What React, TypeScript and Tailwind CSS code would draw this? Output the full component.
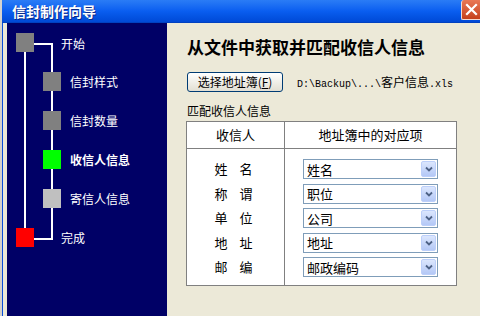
import React from "react";

const cjk = "font-['SimSun','Noto_Sans_CJK_SC',sans-serif]";

const steps = [
  { label: "信封样式", top: 49, color: "bg-[#808080]", bold: false },
  { label: "信封数量", top: 88, color: "bg-[#808080]", bold: false },
  { label: "收信人信息", top: 127, color: "bg-[#00ff00]", bold: true },
  { label: "寄信人信息", top: 166, color: "bg-[#c0c0c0]", bold: false },
];

const rows = [
  { name: ["姓", "名"], value: "姓名" },
  { name: ["称", "谓"], value: "职位" },
  { name: ["单", "位"], value: "公司" },
  { name: ["地", "址"], value: "地址" },
  { name: ["邮", "编"], value: "邮政编码" },
];

function Combo({ value }: { value: string }) {
  return (
    <div className="flex h-[20px] w-[135px] items-center justify-between border border-[#7f9db9] bg-white pl-[3px] pr-[1px]">
      <span className="text-[13px] leading-none text-black">{value}</span>
      <div className="flex h-[16px] w-[15px] items-center justify-center rounded-[2px] border border-[#bccffa] bg-linear-to-b from-[#dbe6fd] to-[#b4c8f6]">
        <svg width="8" height="6" viewBox="0 0 8 6">
          <path d="M1 1.5 L4 4.5 L7 1.5" fill="none" stroke="#4d6185" strokeWidth="1.8" />
        </svg>
      </div>
    </div>
  );
}

export default function App() {
  return (
    <div className={`flex h-[316px] w-[480px] overflow-hidden bg-[#d4d0c8] ${cjk}`}>
      <div className="w-[2px] bg-[#d6d3ce]" />

      <div className="flex flex-1 flex-col">
        {/* title bar */}
        <div className="flex h-[23px] items-start bg-linear-to-b from-[#2a7cf6] via-[#0a5ef0] to-[#0049d6] border-b border-[#0041c0]">
          <span className="ml-[10px] mt-[2px] text-[14px] font-bold leading-[18px] text-white [text-shadow:1px_1px_0_#0b2a8a]">
            信封制作向导
          </span>
          <div className="ml-auto flex h-[20px] w-[19px] items-center justify-center rounded-bl-[2px] rounded-tl-[3px] border-b border-l border-[#f4d9cf] bg-linear-to-b from-[#e97855] to-[#c5401a]">
            <svg width="13" height="13" viewBox="0 0 13 13">
              <path d="M2 2 L11 11 M11 2 L2 11" stroke="white" strokeWidth="2.2" strokeLinecap="square" />
            </svg>
          </div>
        </div>

        <div className="flex flex-1">
          <div className="w-[1px] bg-[#0a4fd8]" />
          <div className="w-[4px] bg-[#ece9d8]" />

          {/* step tree */}
          <div className="relative w-[160px] bg-[#000066]">
            <div className="absolute left-[17px] top-[29px] h-[176px] w-[2px] bg-white" />
            <div className="absolute left-[27px] top-[20px] h-[2px] w-[19px] bg-white" />
            <div className="absolute left-[44px] top-[20px] h-[197px] w-[2px] bg-white" />
            <div className="absolute left-[27px] top-[215px] h-[2px] w-[19px] bg-white" />

            <div className="absolute left-[9px] top-[10px] h-[19px] w-[18px] bg-[#808080]" />
            <span className="absolute left-[54px] top-[13px] text-[12px] leading-[16px] text-white">开始</span>

            {steps.map((s) => (
              <React.Fragment key={s.label}>
                <div className={`absolute left-[36px] h-[19px] w-[18px] ${s.color}`} style={{ top: s.top }} />
                <span
                  className={`absolute left-[63px] text-[12px] leading-[16px] text-white ${s.bold ? "font-bold" : ""}`}
                  style={{ top: s.top + 2 }}
                >
                  {s.label}
                </span>
              </React.Fragment>
            ))}

            <div className="absolute left-[9px] top-[205px] h-[19px] w-[18px] bg-[#ff0000]" />
            <span className="absolute left-[54px] top-[207px] text-[12px] leading-[16px] text-white">完成</span>
          </div>

          {/* content */}
          <div className="flex flex-1 flex-col bg-[#ece9d8] pl-[19px] pt-[12px] text-black">
            <h1 className="ml-[1px] text-[17px] font-bold leading-[24px]">从文件中获取并匹配收信人信息</h1>

            <div className="ml-[1px] mt-[13px] flex items-center gap-[14px]">
              <button className="h-[20px] w-[96px] rounded-[3px] border border-[#003c74] bg-linear-to-b from-white to-[#e2dfd3] text-[12px] leading-none">
                选择地址簿(<span className="underline">F</span>)
              </button>
              <span className="text-[10px] font-['Liberation_Mono',monospace]">
                {"D:\\Backup\\...\\"}
                <span className={`text-[12px] ${cjk}`}>客户信息</span>
                .xls
              </span>
            </div>

            <div className="ml-[1px] mt-[11px] text-[12px] leading-[16px]">匹配收信人信息</div>

            <div className="mt-[2px] flex h-[165px] w-[271px] flex-col border border-[#808080] bg-white">
              <div className="flex h-[27px] border-b border-[#808080] text-[13px]">
                <div className="flex w-[98px] items-center justify-center border-r border-[#808080]">收信人</div>
                <div className="flex flex-1 items-center justify-center">地址簿中的对应项</div>
              </div>
              <div className="flex flex-1">
                <div className="flex w-[98px] flex-col items-center gap-[4.5px] border-r border-[#808080] pt-[10px] pr-[4px]">
                  {rows.map((r) => (
                    <div key={r.value} className="flex h-[20px] w-[38px] items-center justify-between text-[13px]">
                      <span>{r.name[0]}</span>
                      <span>{r.name[1]}</span>
                    </div>
                  ))}
                </div>
                <div className="flex flex-1 flex-col items-center gap-[4.5px] pt-[10px]">
                  {rows.map((r) => (
                    <Combo key={r.value} value={r.value} />
                  ))}
                </div>
              </div>
            </div>
          </div>
        </div>
      </div>
    </div>
  );
}
